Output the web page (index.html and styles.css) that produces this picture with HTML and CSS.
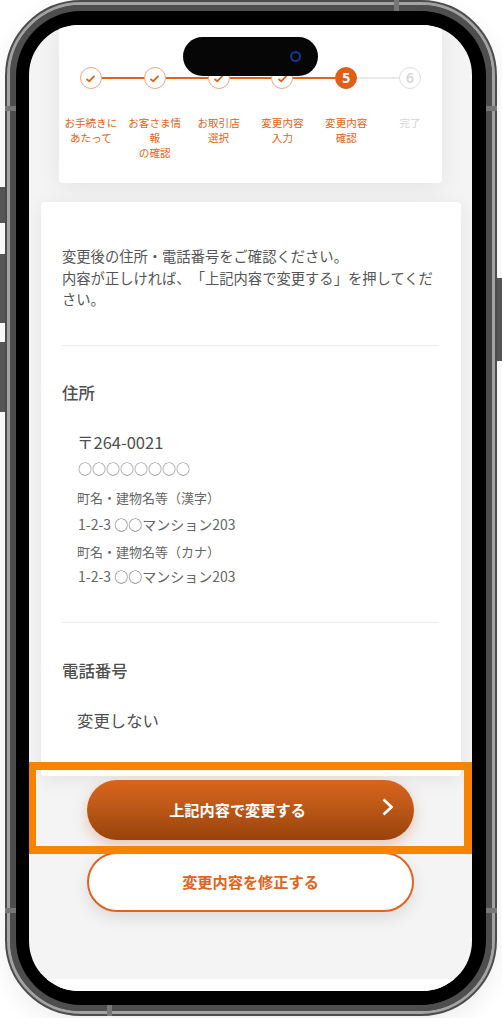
FILE: index.html
```html
<!DOCTYPE html>
<html lang="ja">
<head>
<meta charset="utf-8">
<title>変更内容確認</title>
<link rel="stylesheet" href="styles.css">
</head>
<body>
<div class="phone">
  <span class="side side-a"></span><span class="side side-b"></span><span class="side side-c"></span><span class="side side-d"></span>
  <span class="mark mark-top"></span><span class="mark mark-bottom"></span><span class="mark mark-lt"></span><span class="mark mark-rt"></span><span class="mark mark-lb"></span><span class="mark mark-rb"></span>
  <div class="ring"><div class="rim"><div class="bezel">
    <div class="screen">
      <div class="island"><span class="camera"></span></div>
      <section class="steps">
        <div class="step done"><span class="dot"><svg viewBox="0 0 12 10" class="check"><path d="M1.5 5.5 4.6 8 10.5 2"/></svg></span><span class="label">お手続きにあたって</span></div>
        <div class="step done"><span class="dot"><svg viewBox="0 0 12 10" class="check"><path d="M1.5 5.5 4.6 8 10.5 2"/></svg></span><span class="label">お客さま情報<br>の確認</span></div>
        <div class="step done"><span class="dot"><svg viewBox="0 0 12 10" class="check"><path d="M1.5 5.5 4.6 8 10.5 2"/></svg></span><span class="label">お取引店<br>選択</span></div>
        <div class="step done"><span class="dot"><svg viewBox="0 0 12 10" class="check"><path d="M1.5 5.5 4.6 8 10.5 2"/></svg></span><span class="label">変更内容<br>入力</span></div>
        <div class="step current"><span class="dot">5</span><span class="label">変更内容<br>確認</span></div>
        <div class="step todo"><span class="dot">6</span><span class="label">完了</span></div>
      </section>
      <main class="card">
        <p class="intro">変更後の住所・電話番号をご確認ください。<br>内容が正しければ、「上記内容で変更する」を押してください。</p>
        <hr class="rule rule-one">
        <h2 class="heading">住所</h2>
        <div class="address">
          <p class="zip">〒264-0021</p>
          <p class="pref">○○○○○○○○</p>
          <p class="caption">町名・建物名等（漢字）</p>
          <p class="value">1-2-3 ○○マンション203</p>
          <p class="caption caption-two">町名・建物名等（カナ）</p>
          <p class="value value-two">1-2-3 ○○マンション203</p>
        </div>
        <hr class="rule rule-two">
        <h2 class="heading">電話番号</h2>
        <p class="phone-value">変更しない</p>
      </main>
      <div class="actions">
        <a class="btn btn-primary"><span>上記内容で変更する</span><svg viewBox="0 0 11 18" class="chevron"><path d="M1.5 1.5 9.5 9 1.5 16.5"/></svg></a>
        <a class="btn btn-secondary">変更内容を修正する</a>
      </div>
      <div class="highlight"></div>
      <div class="bottom-band"></div>
    </div>
  </div></div></div>
</div>
</body>
</html>
```
FILE: styles.css
```css
* { box-sizing: border-box; }
html, body { margin: 0; padding: 0; background: #fff; }
body { width: 502px; height: 1018px; overflow: hidden; font-family: "Noto Sans CJK JP", "Noto Sans", sans-serif; color: #555; text-spacing-trim: space-all; }
p, h2 { margin: 0; }

.phone { position: relative; width: 492px; height: 1016px; margin-left: 5px; border: 2px solid #4c4c4c; border-radius: 76px; box-shadow: 0 8px 24px rgba(0,0,0,.07); background: #4c4c4c; }
.ring { height: 100%; border: 3px solid #a3a3a3; border-radius: 74px; }
.rim { height: 100%; border: 6px solid #4e4e4e; border-radius: 71px; }
.bezel { height: 100%; padding: 14px 14px 14px 13px; background: #000; border-radius: 65px; }
.screen { position: relative; height: 100%; overflow: hidden; background: #f4f4f4; border-radius: 50px; }

.side { position: absolute; width: 5px; background: #555; }
.side-a { left: -7px; top: 185px; height: 36px; }
.side-b { left: -7px; top: 252px; height: 69px; }
.side-c { left: -7px; top: 340px; height: 70px; }
.side-d { right: -7px; top: 276px; height: 83px; }
.mark { position: absolute; background: #777; z-index: 1; }
.mark-top { left: 387px; top: -2px; width: 5px; height: 11px; }
.mark-bottom { left: 100px; bottom: -2px; width: 5px; height: 11px; }
.mark-lt, .mark-rt, .mark-lb, .mark-rb { width: 11px; height: 5px; }
.mark-lt { left: -2px; top: 104px; }
.mark-rt { right: -2px; top: 104px; }
.mark-lb { left: -2px; top: 906px; }
.mark-rb { right: -2px; top: 906px; }

.island { position: absolute; z-index: 3; left: 154px; top: 12px; width: 135px; height: 39px; background: #060606; border-radius: 20px; }
.camera { position: absolute; left: 107px; top: 14px; width: 11px; height: 11px; border: 2px solid #0c3a8c; border-radius: 50%; }

.steps { display: grid; grid-template-columns: repeat(6, 1fr); width: 383px; height: 158px; margin-left: 30px; padding-top: 42px; background: #fff; border-radius: 0 0 4px 4px; box-shadow: 0 4px 24px rgba(0,0,0,.07); }
.step { position: relative; display: flex; flex-direction: column; align-items: center; padding: 0 3px; }
.step::after { content: ""; position: absolute; left: 50%; top: 10px; width: 100%; height: 2px; background: #e0631f; }
.step:last-child::after { display: none; }
.step.current::after { background: #e8e8e8; }
.dot { position: relative; z-index: 1; display: flex; align-items: center; justify-content: center; width: 22px; height: 22px; background: #fff; border: 1px solid #efa47c; border-radius: 50%; font-size: 14px; line-height: 1; font-weight: 700; font-family: "Noto Sans", sans-serif; }
.check { width: 11px; height: 9px; fill: none; stroke: #df6420; stroke-width: 2; }
.current .dot { background: #df5f17; border-color: #df5f17; color: #fff; }
.todo .dot { border-color: #dedede; color: #d6d6d6; font-weight: 600; }
.label { margin-top: 26px; width: 100%; font-size: 10.6px; line-height: 15px; text-align: center; color: #df6420; }
.todo .label { color: #d4d4d4; }

.card { width: 420px; height: 574px; margin: 19px 0 0 12px; padding: 43px 22px 0 21px; background: #fff; border-radius: 4px; box-shadow: 0 4px 20px rgba(0,0,0,.07); }
.intro { font-size: 14.3px; line-height: 21.5px; height: 65px; }
.rule { margin: 0; border: 0; height: 1px; background: #ececec; }
.rule-one { margin-top: 35px; }
.rule-two { margin-top: 36px; }
.heading { font-size: 16.4px; line-height: 24px; font-weight: 500; color: #505050; }
.rule-one + .heading { margin-top: 34px; }
.rule-two + .heading { margin-top: 35px; }
.address { margin-top: 26px; padding-left: 15px; }
.zip { font-size: 16.5px; line-height: 24px; color: #4f4f4f; }
.pref { font-size: 14px; line-height: 20px; margin-top: 4px; padding-left: 1px; color: #777; }
.caption { font-size: 13px; line-height: 18px; margin-top: 11px; color: #666; }
.value { font-size: 14px; line-height: 20px; margin-top: 7px; padding-left: 1px; color: #666; }
.caption-two { margin-top: 9px; }
.value-two { margin-top: 5px; }
.phone-value { font-size: 16.4px; line-height: 24px; margin-top: 26px; padding-left: 15px; color: #4f4f4f; }

.actions { position: absolute; left: 58px; top: 755px; width: 327px; display: flex; flex-direction: column; gap: 13px; }
.btn { display: flex; align-items: center; justify-content: center; width: 327px; font-size: 15.2px; font-weight: 700; border-radius: 30px; }
.btn-primary { position: relative; height: 60px; padding-right: 26px; color: #fff; background: linear-gradient(#d9641c, #c05a18 40%, #98430c); box-shadow: 0 5px 14px rgba(190,90,30,.3); }
.btn-primary span { position: relative; top: -1px; }
.chevron { position: absolute; right: 21px; top: 18px; width: 11px; height: 18px; fill: none; stroke: #fff; stroke-width: 2.6; }
.btn-secondary { height: 60px; margin-top: -1px; padding-bottom: 3px; color: #df6420; background: #fff; border: 2px solid #df6420; box-shadow: 0 6px 16px rgba(0,0,0,.1); }

.highlight { position: absolute; z-index: 2; left: -1px; top: 737px; width: 444px; height: 92px; border: 8px solid #f78400; }
.bottom-band { position: absolute; left: 0; right: 0; bottom: 0; height: 12px; background: #fff; }
```
